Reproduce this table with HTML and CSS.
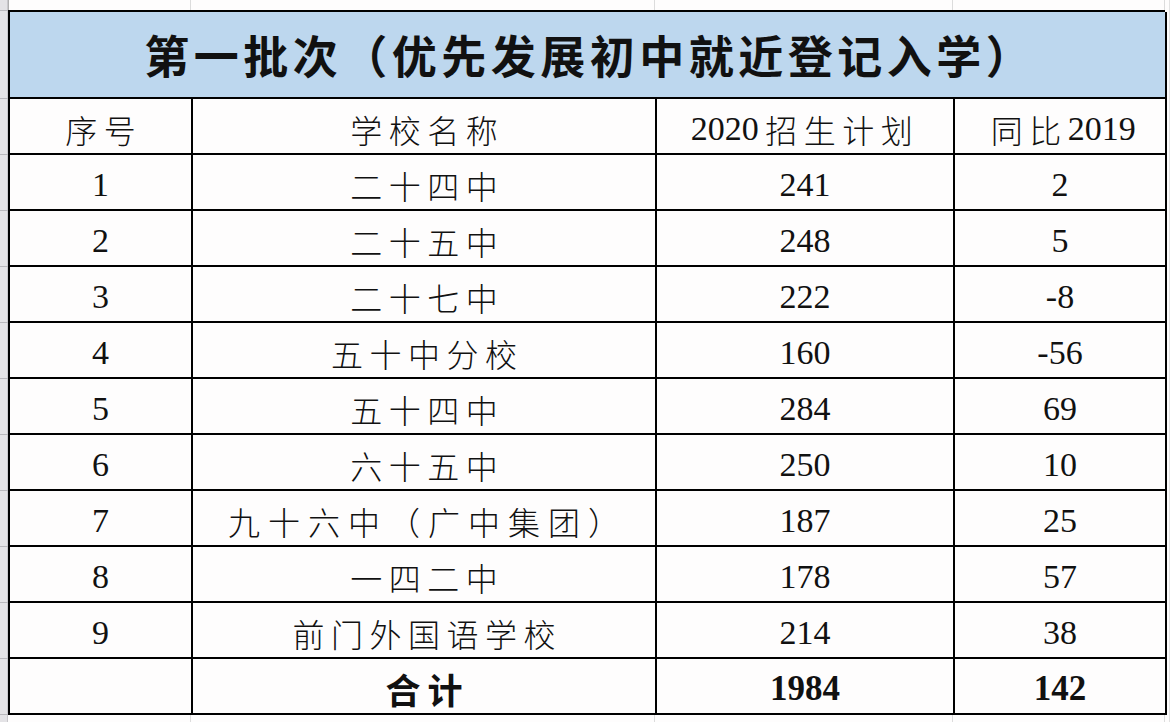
FILE: index.html
```html
<!DOCTYPE html>
<html lang="zh-CN">
<head>
<meta charset="utf-8">
<title>第一批次</title>
<link rel="stylesheet" href="styles.css">
</head>
<body>
<div class="sheet">
  <div class="rowhdr">
    <div class="rh rh-top"></div>
    <div class="rh rh-title"></div>
    <div class="rh"></div><div class="rh"></div><div class="rh"></div><div class="rh"></div>
    <div class="rh"></div><div class="rh"></div><div class="rh"></div><div class="rh"></div>
    <div class="rh"></div><div class="rh"></div><div class="rh"></div>
    <div class="rh rh-rest"></div>
  </div>
  <div class="main">
    <div class="strip strip-top">
      <div class="gc gc1"></div><div class="gc gc2"></div><div class="gc gc3"></div><div class="gc gc4"></div>
    </div>
    <div class="grid">
      <div class="cell title"><span class="title-text">第一批次（优先发展初中就近登记入学）</span></div>

      <div class="cell"><span class="cj">序号</span></div>
      <div class="cell"><span class="cj">学校名称</span></div>
      <div class="cell"><span class="num">2020</span><span class="cj">招生计划</span></div>
      <div class="cell"><span class="cj">同比</span><span class="num">2019</span></div>

      <div class="cell num">1</div><div class="cell"><span class="cj">二十四中</span></div><div class="cell num">241</div><div class="cell num">2</div>
      <div class="cell num">2</div><div class="cell"><span class="cj">二十五中</span></div><div class="cell num">248</div><div class="cell num">5</div>
      <div class="cell num">3</div><div class="cell"><span class="cj">二十七中</span></div><div class="cell num">222</div><div class="cell num">-8</div>
      <div class="cell num">4</div><div class="cell"><span class="cj">五十中分校</span></div><div class="cell num">160</div><div class="cell num">-56</div>
      <div class="cell num">5</div><div class="cell"><span class="cj">五十四中</span></div><div class="cell num">284</div><div class="cell num">69</div>
      <div class="cell num">6</div><div class="cell"><span class="cj">六十五中</span></div><div class="cell num">250</div><div class="cell num">10</div>
      <div class="cell num">7</div><div class="cell"><span class="cj wide">九十六中（广中集团）</span></div><div class="cell num">187</div><div class="cell num">25</div>
      <div class="cell num">8</div><div class="cell"><span class="cj">一四二中</span></div><div class="cell num">178</div><div class="cell num">57</div>
      <div class="cell num">9</div><div class="cell"><span class="cj">前门外国语学校</span></div><div class="cell num">214</div><div class="cell num">38</div>

      <div class="cell"></div><div class="cell"><span class="cj total-cj">合计</span></div><div class="cell num total">1984</div><div class="cell num total">142</div>
    </div>
    <div class="strip strip-bot">
      <div class="gc gc1"></div><div class="gc gc2"></div><div class="gc gc3"></div><div class="gc gc4"></div>
    </div>
  </div>
  <div class="rightstrip"></div>
</div>
</body>
</html>
```

FILE: styles.css
```css
html, body {
  margin: 0;
  padding: 0;
  background: #fefdfd;
  overflow: hidden;
}

.sheet {
  display: flex;
  width: 1170px;
  height: 722px;
  color: #111;
}

/* Excel row headers on the left */
.rowhdr {
  width: 8px;
  display: flex;
  flex-direction: column;
  background: #e4e3e6;
  box-shadow: inset -1px 0 0 #c9c8cc;
}
.rh {
  height: 56px;
  box-sizing: border-box;
  border-bottom: 1px solid #b9b8bc;
}
.rh-top { height: 11px; }
.rh-title { height: 88px; }
.rh-rest { flex: 1; border-bottom: 0; }

.main {
  display: flex;
  flex-direction: column;
  width: 1157px;
}

.strip {
  display: flex;
  box-sizing: border-box;
}
.strip-top { height: 10px; }
.strip-bot { flex: 1; }
.gc {
  box-sizing: border-box;
  border-right: 1px solid #dcdcdc;
}
.strip-top .gc1 { border-left: 1px solid #b0b0b0; }
.gc1 { width: 183px; }
.gc2 { width: 464px; }
.gc3 { width: 298px; }
.gc4 { width: 212px; }

.rightstrip {
  width: 5px;
  box-sizing: border-box;
  border-right: 1px solid #e2e2e2;
}

/* the table */
.grid {
  display: grid;
  grid-template-columns: 183px 464px 298px 212px;
  grid-template-rows: 87px repeat(11, 56px);
  box-sizing: border-box;
  border-top: 2px solid #000;
  border-left: 2px solid #000;
  width: 1157px;
}

.cell {
  box-sizing: border-box;
  border-right: 2px solid #000;
  border-bottom: 2px solid #000;
  display: flex;
  align-items: center;
  justify-content: center;
  font-family: "Liberation Serif", "Noto Sans CJK SC", serif;
  font-size: 34px;
  font-weight: 300;
  line-height: 1;
  white-space: nowrap;
  padding-top: 5px;
}

.title {
  grid-column: 1 / 5;
  background: #bdd7ee;
  padding-top: 0;
}
.title-text {
  font-family: "Noto Sans CJK SC", sans-serif;
  font-size: 45px;
  font-weight: 600;
  letter-spacing: 4.5px;
  padding-left: 4.5px;
}

.cj {
  font-family: "Noto Sans CJK SC", sans-serif;
  font-size: 32px;
  font-weight: 300;
  letter-spacing: 6.5px;
  padding-left: 6.5px;
}
.cj.wide {
  letter-spacing: 8px;
  padding-left: 8px;
}
.num {
  font-family: "Liberation Serif", serif;
  font-weight: 400;
}

.total {
  font-weight: 700;
  font-size: 35px;
}
.total-cj {
  font-weight: 700;
  font-size: 35px;
  letter-spacing: 7px;
  padding-left: 7px;
}
```
